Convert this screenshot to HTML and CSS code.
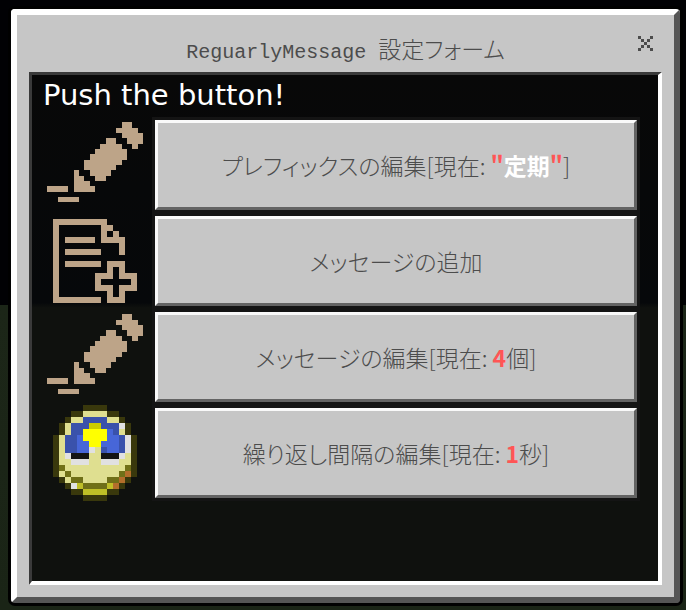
FILE: index.html
```html
<!DOCTYPE html>
<html lang="ja">
<head>
    <meta charset="UTF-8">
    <meta name="viewport" content="width=device-width, initial-scale=1.0">
    <title>ReguarlyMessage 設定フォーム</title>
    <link rel="stylesheet" href="styles.css">
</head>
<body>
    <svg class="sprites" aria-hidden="true">
        <symbol id="pencil" viewBox="0 0 18 18">
            <path transform="translate(0 .5)" stroke="#bda488" d="M14 1h2M13 2h4M14 3h4M11 4h2M15 4h3M10 5h4M16 5h1M9 6h6M8 7h7M7 8h7M7 9h6M5 10h1M8 10h4M5 11h2M9 11h2M5 12h3M0 13h4M5 13h4M2 15h4"/>
        </symbol>
    </svg>

    <main class="window">
        <header class="title-bar">
            <h1>ReguarlyMessage <span>設定フォーム</span></h1>
            <button class="close" aria-label="閉じる">
                <svg viewBox="0 0 5 5" shape-rendering="crispEdges">
                    <path transform="translate(0 .5)" stroke="#4c4c4c" d="M0 0h1M4 0h1M1 1h1M3 1h1M2 2h1M1 3h1M3 3h1M0 4h1M4 4h1"/>
                </svg>
            </button>
        </header>

        <section class="content">
            <p class="message">Push the button!</p>

            <div class="row">
                <svg class="icon"><use href="#pencil"/></svg>
                <button class="item">プレフィックスの編集[現在: <b>"<i>定期</i>"</b>]</button>
            </div>
            <div class="row">
                <svg class="icon" viewBox="0 0 16 16">
                    <path transform="translate(0 .5)" stroke="#bda488" d="M1 1h9M1 2h1M9 2h2M1 3h1M9 3h1M11 3h1M1 4h1M3 4h5M9 4h4M1 5h1M12 5h1M1 6h1M3 6h6M12 6h1M1 7h1M1 8h1M3 8h6M10 8h3M1 9h1M10 9h1M12 9h1M1 10h1M8 10h3M12 10h3M1 11h1M8 11h1M14 11h1M1 12h1M8 12h3M12 12h3M1 13h1M10 13h1M12 13h1M1 14h8M10 14h3"/>
                </svg>
                <button class="item">メッセージの追加</button>
            </div>
            <div class="row">
                <svg class="icon"><use href="#pencil"/></svg>
                <button class="item">メッセージの編集[現在: <b>4</b>個]</button>
            </div>
            <div class="row">
                <svg class="icon" viewBox="0 0 16 16">
                    <g transform="translate(0 .5)">
                        <path stroke="#dfdf90" d="M6 1h4M4 2h8M3 3h10M3 4h10M2 5h12M2 6h12M2 7h12M2 8h12M2 9h12M3 10h10M2 11h11M3 12h9"/>
                        <path stroke="#39380c" d="M6 0h4M4 1h2M10 1h2M3 2h1M12 2h1M2 3h1M13 3h1M2 4h1M13 4h1M1 5h1M14 5h1M1 6h1M14 6h1M1 7h1M14 7h1M1 8h1M14 8h1M1 9h1M14 9h1M1 10h1M14 10h1M1 11h1M14 11h1M2 12h1M13 12h1M3 13h1M12 13h1M4 14h2M10 14h2M6 15h4"/>
                        <path stroke="#3a52ab" d="M6 2h4M4 3h8M4 4h8M3 5h10M3 6h10M3 7h4M9 7h4"/>
                        <path stroke="#4766d8" d="M10 4h1M5 5h1M10 5h2M5 6h2M9 6h3M5 7h2M10 7h2"/>
                        <path stroke="#cccb00" d="M7 3h2"/>
                        <path stroke="#ffff00" d="M6 4h4M6 5h4M7 6h2"/>
                        <path stroke="#e1e1e1" d="M12 3h1M13 5h1M13 6h1M7 7h1M13 7h1M3 8h1M12 8h1M4 9h3M9 9h3M4 13h1"/>
                        <path stroke="#141414" d="M4 8h3M9 8h3"/>
                        <path stroke="#707018" d="M2 10h1M13 10h1M3 11h1M12 11h1M4 12h2M10 12h2M6 13h4"/>
                        <path stroke="#bfbf27" d="M5 13h1M10 13h1M6 14h4"/>
                        <path stroke="#b36e2b" d="M13 11h1M12 12h1M11 13h1"/>
                    </g>
                </svg>
                <button class="item">繰り返し間隔の編集[現在: <b>1</b>秒]</button>
            </div>
        </section>
    </main>
</body>
</html>
```

FILE: styles.css
```css
* {
    box-sizing: border-box;
}

body {
    margin: 0;
    padding: 9px 6px 7px 11px;
    min-height: 100vh;
    display: flex;
    background: linear-gradient(#010104 0, #010104 50%, #1c2618 50%, #1a2416 100%);
    font-family: "Noto Sans CJK JP", sans-serif;
    color: #4c4c4c;
}

.sprites {
    display: none;
}

.window {
    flex: 1;
    display: flex;
    flex-direction: column;
    padding: 0 12px 12px;
    background: #c6c6c6;
    border: 6px solid;
    border-color: #fff #555 #555 #fff;
    border-radius: 4px;
    box-shadow: 0 0 0 3px #000;
}

.title-bar {
    position: relative;
    height: 57px;
    padding-top: 15px;
}

.title-bar h1 {
    margin: 0;
    font: 20px/36px "Liberation Mono", monospace;
    text-align: center;
}

.title-bar span {
    font-family: "Noto Sans CJK JP", sans-serif;
    font-size: 23px;
    font-weight: 300;
    font-feature-settings: "palt";
}

.close {
    position: absolute;
    top: 15px;
    right: 3px;
    padding: 6px;
    border: 0;
    background: none;
    cursor: pointer;
}

.close svg {
    display: block;
    width: 15px;
    height: 15px;
}

.content {
    flex: 1;
    padding: 0 21px 0 15px;
    background: linear-gradient(#080808 0, #06080a 45%, #0f110e 46%, #0f110e 100%);
    border: 3px solid;
    border-color: #3a3a3a #fff #fff #3a3a3a;
    border-right-width: 4px;
    border-bottom-width: 4px;
}

.message {
    margin: 0 -4px;
    height: 42px;
    font: 29px/40px "DejaVu Sans", sans-serif;
    color: #fff;
}

.row {
    display: flex;
    align-items: center;
    gap: 12px;
    height: 96px;
}

.icon {
    flex: none;
    width: 96px;
    height: 96px;
    shape-rendering: crispEdges;
}

.item {
    flex: 1;
    height: 90px;
    padding: 0;
    background: #c6c6c6;
    border: 3px solid;
    border-color: #f9f9f9 #636363 #636363 #f9f9f9;
    box-shadow: 0 0 0 3px #141414;
    font-family: inherit;
    font-size: 23px;
    font-weight: 300;
    font-feature-settings: "palt";
    color: inherit;
    cursor: pointer;
}

.item b {
    font-weight: bold;
    color: #ff5555;
}

.item i {
    font-style: normal;
    color: #fff;
}
```
